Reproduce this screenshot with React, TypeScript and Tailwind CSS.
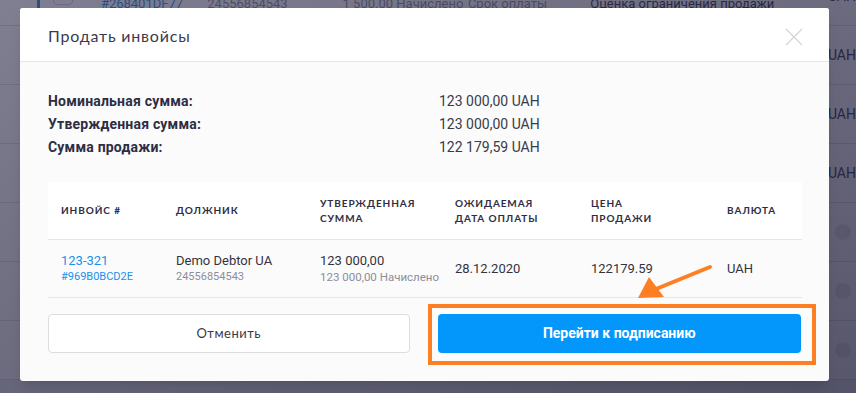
import React from "react";

const bgRows = [
  { id: "#268401DF77", inn: "24556854543", sum: "1 500.00 Начислено", due: "Срок оплаты", note: "Оценка ограничения продажи", cur: true },
  { id: "#18A0CE4410", inn: "24556854543", sum: "3 200.00 Начислено", due: "Срок оплаты", note: "Ожидает продажи", cur: true },
  { id: "#7710BD02AC", inn: "24556854543", sum: "9 800.00 Начислено", due: "Срок оплаты", note: "Ожидает продажи", cur: true },
  { id: "#55AC01EF21", inn: "24556854543", sum: "4 400.00 Начислено", due: "Срок оплаты", note: "Ожидает продажи", cur: true },
  { id: "#0219DD71B3", inn: "24556854543", sum: "2 750.00 Начислено", due: "Срок оплаты", note: "Ожидает продажи", cur: false },
  { id: "#91EE54A0C8", inn: "24556854543", sum: "6 120.00 Начислено", due: "Срок оплаты", note: "Ожидает продажи", cur: false },
  { id: "#4D0AC77E19", inn: "24556854543", sum: "8 000.00 Начислено", due: "Срок оплаты", note: "Ожидает продажи", cur: false },
];

const summary = [
  ["Номинальная сумма:", "123 000,00 UAH"],
  ["Утвержденная сумма:", "123 000,00 UAH"],
  ["Сумма продажи:", "122 179,59 UAH"],
];

function Background() {
  return (
    <div className="absolute inset-0 flex flex-col bg-[#eef0f4] text-[13px] text-[#2f2f45]">
      <div className="-mt-[33px] flex flex-col">
        {bgRows.map((r, i) => (
          <div key={i} className="flex h-[59px] items-center border-b border-[#dcdde3] bg-white">
            <div className="ml-[37px] h-full w-[3px] bg-[#1d8fe6]" />
            <div className="ml-[13px] mt-[18px] h-[20px] w-[20px] self-start rounded border border-[#cfd1d8]" />
            <div className="ml-[28px] mt-[27px] w-[107px] self-start text-[#1d8fe6]">{r.id}</div>
            <div className="mt-[27px] w-[136px] self-start text-[#8a8a99]">{r.inn}</div>
            <div className="mt-[27px] w-[126px] self-start text-[#8a8a99]">{r.sum}</div>
            <div className="mt-[27px] w-[123px] self-start text-[#8a8a99]">{r.due}</div>
            <div className="mt-[27px] w-[239px] self-start">{r.note}</div>
            {r.cur ? (
              <div className="text-[14px]">UAH</div>
            ) : (
              <div className="ml-[3px] h-[16px] w-[16px] rounded-full bg-[#e4e5ea]" />
            )}
          </div>
        ))}
      </div>
      <div className="absolute inset-0 bg-gradient-to-br from-[#2c2a48]/60 to-[#1f1e3a]/75" />
    </div>
  );
}

function HeadCell({ children, w }: { children: React.ReactNode; w: string }) {
  return (
    <div className={`${w} text-[10px] font-bold uppercase leading-[15px] tracking-[0.9px] text-[#2e2d44]`}>
      {children}
    </div>
  );
}

export default function App() {
  return (
    <div className="relative h-[393px] w-[856px] overflow-hidden" style={{ fontFamily: "Roboto, 'Liberation Sans', sans-serif" }}>
      <Background />

      <div className="absolute left-[20px] top-[8px] flex w-[809px] flex-col overflow-hidden rounded-[3px] bg-[#fbfbfb] shadow-lg">
        <div className="flex h-[54px] items-center justify-between border-b border-[#e6e6ea] bg-white pl-[28px] pr-[26px]">
          <div className="mt-[2px] text-[16px] tracking-[0.8px] text-[#3b3a4e]" style={{ fontFamily: "Lato, 'Open Sans', sans-serif" }}>
            Продать инвойсы
          </div>
          <svg width="18" height="18" viewBox="0 0 18 18" className="mt-[4px]">
            <path d="M1 1L17 17M17 1L1 17" stroke="#d2d2d7" strokeWidth="1.1" />
          </svg>
        </div>

        <div className="flex flex-col px-[28px] pb-[28px] pt-[30px]">
          <div className="flex flex-col gap-[5px]">
            {summary.map(([k, v]) => (
              <div key={k} className="flex h-[18px] items-center text-[14px]">
                <div className="w-[391px] font-bold tracking-[0.2px] text-[#2e2d44]">{k}</div>
                <div className="text-[#3a3a48]">{v}</div>
              </div>
            ))}
          </div>

          <div className="mt-[26px] flex w-[754px] flex-col" style={{ fontFamily: "Lato, 'Open Sans', sans-serif" }}>
            <div className="flex h-[58px] items-center border-b border-[#e6e6ea] bg-white pl-[13px]">
              <HeadCell w="w-[115px]">Инвойс #</HeadCell>
              <HeadCell w="w-[144px]">Должник</HeadCell>
              <HeadCell w="w-[135px]">Утвержденная<br />сумма</HeadCell>
              <HeadCell w="w-[136px]">Ожидаемая<br />дата оплаты</HeadCell>
              <HeadCell w="w-[136px]">Цена<br />продажи</HeadCell>
              <HeadCell w="w-[60px]">Валюта</HeadCell>
            </div>
            <div className="flex h-[58px] items-center border-b border-[#e6e6ea] pl-[13px] text-[13px]" style={{ fontFamily: "Roboto, 'Liberation Sans', sans-serif" }}>
              <div className="flex w-[115px] flex-col leading-[16px]">
                <span className="text-[#1a91ec]">123-321</span>
                <span className="text-[11px] text-[#1a91ec]">#969B0BCD2E</span>
              </div>
              <div className="flex w-[144px] flex-col leading-[16px]">
                <span className="text-[#33333f]">Demo Debtor UA</span>
                <span className="text-[11px] text-[#8d8d99]">24556854543</span>
              </div>
              <div className="flex w-[135px] flex-col leading-[16px]">
                <span className="text-[#33333f]">123 000,00</span>
                <span className="whitespace-nowrap text-[11.5px] text-[#8d8d99]">123 000,00 Начислено</span>
              </div>
              <div className="w-[136px] text-[#33333f]">28.12.2020</div>
              <div className="w-[136px] text-[#33333f]">122179.59</div>
              <div className="w-[60px] text-[#33333f]">UAH</div>
            </div>
          </div>

          <div className="mt-[16px] flex gap-[28px]">
            <button
              className="h-[39px] w-[362px] rounded-[4px] border border-[#dcdce2] bg-white text-[13px] tracking-[0.5px] text-[#3a3a46]"
              style={{ fontFamily: "Lato, 'Open Sans', sans-serif" }}
            >
              Отменить
            </button>
            <button className="h-[39px] w-[364px] rounded-[4px] bg-[#0396fb] text-[14px] font-bold text-white">
              Перейти к подписанию
            </button>
          </div>
        </div>
      </div>

      {/* annotation overlay */}
      <div className="pointer-events-none absolute left-[428px] top-[304px] h-[61px] w-[388px] border-[4px] border-[#fd7f24]" />
      <svg className="pointer-events-none absolute left-0 top-0" width="856" height="393">
        <path d="M710 267L656 289" stroke="#fd7f24" strokeWidth="4" strokeLinecap="round" />
        <polygon points="649,277 638,298 664,297" fill="#fd7f24" />
      </svg>
    </div>
  );
}
